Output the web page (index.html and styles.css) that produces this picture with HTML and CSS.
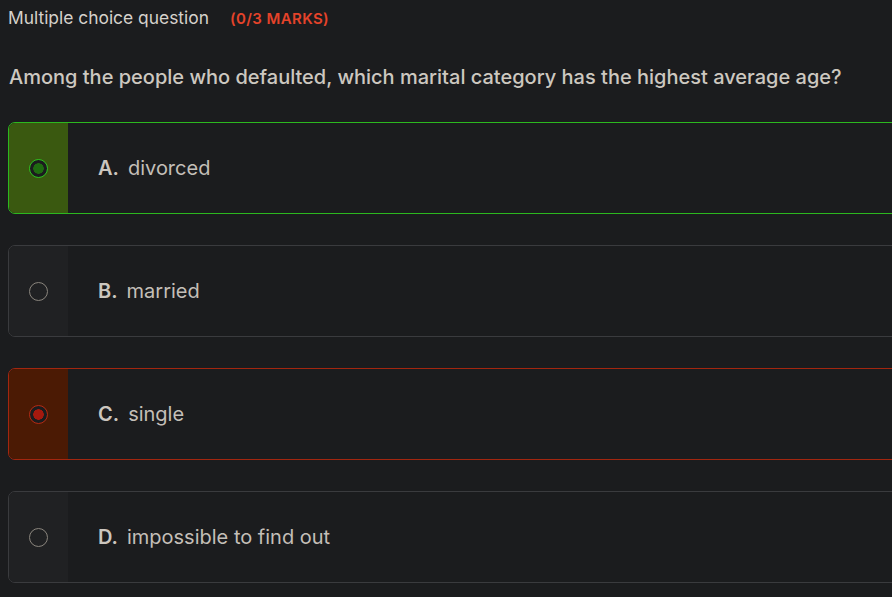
FILE: index.html
```html
<!DOCTYPE html>
<html>
<head>
<meta charset="utf-8">
<link rel="stylesheet" href="styles.css">
</head>
<body>
<div class="page">
  <div class="meta">
    <span class="kind">Multiple choice question</span>
    <span class="marks">(0/3 MARKS)</span>
  </div>
  <h1 class="question">Among the people who defaulted, which marital category has the highest average age?</h1>
  <div class="options">
    <div class="option correct">
      <div class="side"><span class="radio"></span></div>
      <div class="label"><b>A.</b> divorced</div>
    </div>
    <div class="option">
      <div class="side"><span class="radio"></span></div>
      <div class="label"><b>B.</b> married</div>
    </div>
    <div class="option wrong">
      <div class="side"><span class="radio"></span></div>
      <div class="label"><b>C.</b> single</div>
    </div>
    <div class="option">
      <div class="side"><span class="radio"></span></div>
      <div class="label"><b>D.</b> impossible to find out</div>
    </div>
  </div>
</div>
</body>
</html>
```
FILE: styles.css
```css
html, body {
  margin: 0;
  padding: 0;
  background: #1b1c1e;
  overflow: hidden;
}
body {
  font-family: Inter, "Noto Sans", sans-serif;
  color: #cbc6bf;
}
.page {
  padding: 7px 0 0 8px;
  width: 1000px;
}
.meta {
  display: flex;
  align-items: baseline;
  gap: 21px;
  height: 24px;
}
.kind {
  font-size: 17.4px;
  color: #d5d1cb;
}
.marks {
  font-size: 15px;
  font-weight: 600;
  color: #e5432a;
  letter-spacing: 0.4px;
}
.question {
  margin: 34px 0 0 1px;
  font-size: 20px;
  font-weight: 500;
  color: #cdc8c0;
  line-height: 24px;
}
.options {
  margin-top: 33px;
  display: flex;
  flex-direction: column;
  gap: 31px;
}
.option {
  display: flex;
  height: 92px;
  box-sizing: border-box;
  border: 1px solid #3a3b3e;
  border-radius: 7px;
  overflow: hidden;
  background: #1b1c1e;
}
.side {
  width: 59px;
  display: flex;
  align-items: center;
  justify-content: center;
  background: #202123;
}
.radio {
  width: 19px;
  height: 19px;
  box-sizing: border-box;
  border-radius: 50%;
  border: 1px solid #8a857d;
}
.label {
  display: flex;
  align-items: center;
  padding-left: 30px;
  font-size: 20px;
  color: #c4bfb8;
  gap: 9px;
}
.label b {
  font-weight: 600;
  color: #cbc6bf;
}
.correct {
  border-color: #2cb81f;
}
.correct .side {
  background: #3a5910;
}
.correct .radio {
  border-color: #2cc21f;
  background: radial-gradient(circle, #1f6b11 0 5px, #1b1c1e 5.5px);
}
.wrong {
  border-color: #a3260f;
}
.wrong .side {
  background: #4b1a04;
}
.wrong .radio {
  border-color: #b52a14;
  background: radial-gradient(circle, #a5190e 0 5px, #1b1c1e 5.5px);
}
```
